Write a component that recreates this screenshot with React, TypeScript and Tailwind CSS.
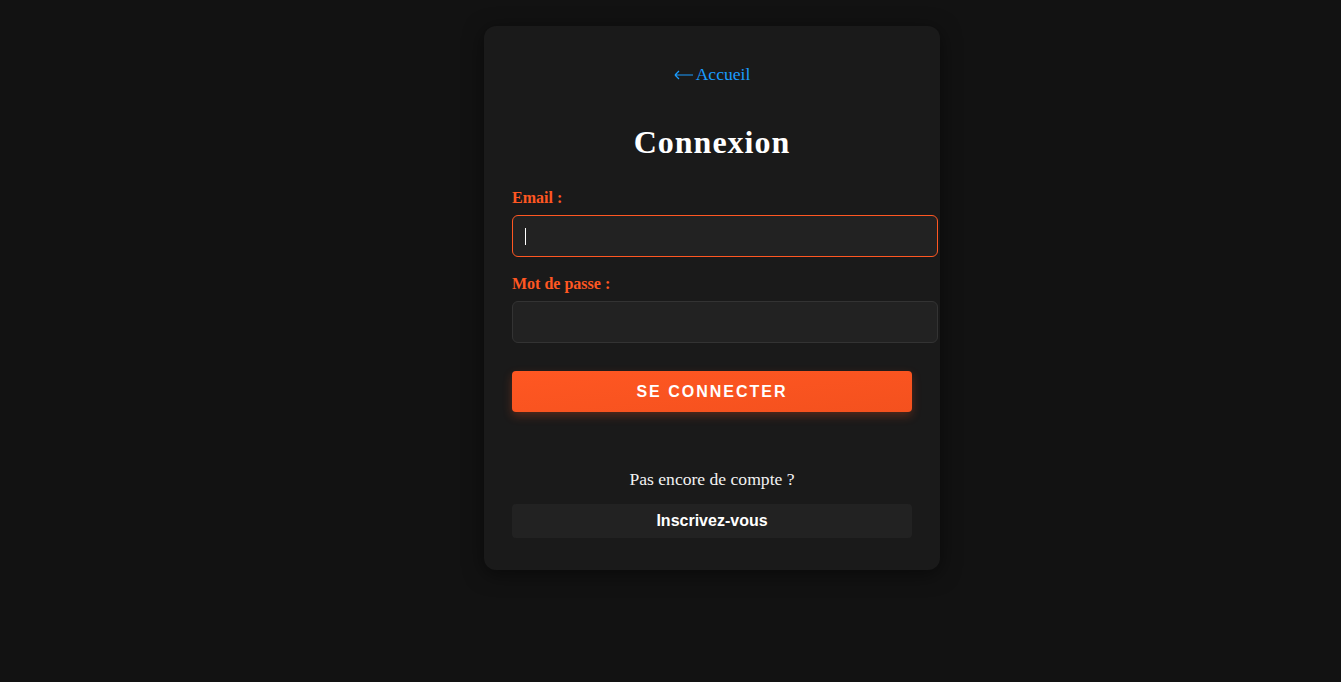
import React from "react";

export default function App() {
  const serif = { fontFamily: '"Liberation Serif", "Times New Roman", serif' };
  const sans = { fontFamily: '"Liberation Sans", Arial, sans-serif' };
  return (
    <div className="min-h-[682px] w-full bg-[#121212] flex justify-center pl-[83px] pt-[26px]" style={serif}>
      <div className="w-[456px] h-[544px] rounded-xl bg-[#1a1a1a] px-[28px] pt-[38px] pb-[32px] flex flex-col shadow-[0_4px_20px_rgba(0,0,0,0.5)]">
        <a href="#" className="flex items-center justify-center gap-[3px] h-[20px] leading-[20px] text-[17.6px] text-[#1a9cff]">
          <svg width="19" height="10" viewBox="0 0 19 10" className="mt-[1px]">
            <path d="M1 5 H19 M1 5 L5 1 M1 5 L5 9" stroke="#1a9cff" strokeWidth="1.2" fill="none" />
          </svg>
          <span>Accueil</span>
        </a>
        <h1 className="mt-[40px] h-[36px] leading-[36px] text-[32px] font-bold text-center text-white tracking-[1px]">
          Connexion
        </h1>
        <label className="mt-[29px] block h-[18px] leading-[18px] text-[16px] font-bold text-[#ff5722]">
          Email :
        </label>
        <div className="relative mt-[8px] w-[426px] h-[42px]">
          <input
            type="email"
            className="w-[426px] h-[42px] rounded-md bg-[#222222] border border-[#ff5722] px-3 text-white outline-none"
          />
          <span className="absolute left-[13px] top-[13px] w-px h-[17px] bg-white" />
        </div>
        <label className="mt-[18px] block h-[18px] leading-[18px] text-[16px] font-bold text-[#ff5722]">
          Mot de passe :
        </label>
        <input
          type="password"
          className="mt-[8px] w-[426px] h-[42px] rounded-md bg-[#222222] border border-[#333333] px-3 text-white outline-none"
        />
        <button
          className="mt-[28px] w-[400px] h-[41px] rounded-[4px] bg-gradient-to-br from-[#ff5722] to-[#f4511e] text-white font-bold text-[16px] tracking-[2px] flex items-center justify-center shadow-[0_4px_10px_rgba(255,87,34,0.25)]"
          style={sans}
        >
          SE CONNECTER
        </button>
        <p className="mt-[57px] h-[20px] leading-[20px] text-[17.6px] text-center text-[#f2f2f2]">
          Pas encore de compte ?
        </p>
        <button
          className="mt-[15px] w-[400px] h-[34px] rounded-[4px] bg-[#222222] text-white font-bold text-[16px] flex items-center justify-center"
          style={sans}
        >
          Inscrivez-vous
        </button>
      </div>
    </div>
  );
}
